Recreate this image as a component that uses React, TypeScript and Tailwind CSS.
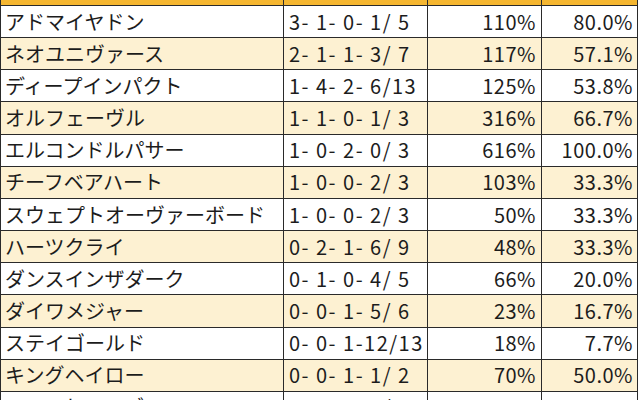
import React from 'react';

type Row = {
  name: string;
  record: string;
  recovery: string;
  rate: string;
};

const rows: Row[] = [
  { name: 'アドマイヤドン', record: '3- 1- 0- 1/ 5', recovery: '110%', rate: '80.0%' },
  { name: 'ネオユニヴァース', record: '2- 1- 1- 3/ 7', recovery: '117%', rate: '57.1%' },
  { name: 'ディープインパクト', record: '1- 4- 2- 6/13', recovery: '125%', rate: '53.8%' },
  { name: 'オルフェーヴル', record: '1- 1- 0- 1/ 3', recovery: '316%', rate: '66.7%' },
  { name: 'エルコンドルパサー', record: '1- 0- 2- 0/ 3', recovery: '616%', rate: '100.0%' },
  { name: 'チーフベアハート', record: '1- 0- 0- 2/ 3', recovery: '103%', rate: '33.3%' },
  { name: 'スウェプトオーヴァーボード', record: '1- 0- 0- 2/ 3', recovery: '50%', rate: '33.3%' },
  { name: 'ハーツクライ', record: '0- 2- 1- 6/ 9', recovery: '48%', rate: '33.3%' },
  { name: 'ダンスインザダーク', record: '0- 1- 0- 4/ 5', recovery: '66%', rate: '20.0%' },
  { name: 'ダイワメジャー', record: '0- 0- 1- 5/ 6', recovery: '23%', rate: '16.7%' },
  { name: 'ステイゴールド', record: '0- 0- 1-12/13', recovery: '18%', rate: '7.7%' },
  { name: 'キングヘイロー', record: '0- 0- 1- 1/ 2', recovery: '70%', rate: '50.0%' },
  { name: 'ヘニーヒューズ', record: '0- 0- 0- 1/ 1', recovery: '0%', rate: '0.0%' },
];

export default function App() {
  return (
    <div
      className="w-[640px] h-[400px] overflow-hidden bg-white text-[#1c1c1c]"
      style={{ fontFamily: '"Noto Sans CJK JP", "Noto Sans", sans-serif' }}
    >
      <div className="w-[638px] border-l border-r border-[#2a2a2a]">
        {/* header strip, mostly cut off at the top */}
        <div className="flex h-[6px] bg-[#f5b630] border-b border-[#2a2a2a]">
          <div className="w-[283px] border-r border-[#2a2a2a]" />
          <div className="w-[144px] border-r border-[#2a2a2a]" />
          <div className="w-[114px] border-r border-[#2a2a2a]" />
          <div className="flex-1" />
        </div>

        {rows.map((row, i) => (
          <div
            key={row.name}
            className={`flex h-[32.17px] border-b border-[#2a2a2a] text-[20px] leading-none ${
              i % 2 === 1 ? 'bg-[#fdf1d2]' : 'bg-white'
            }`}
          >
            <div className="w-[283px] flex items-center pl-[4px] border-r border-[#2a2a2a] whitespace-nowrap overflow-hidden">
              {row.name}
            </div>
            <div className="w-[144px] flex items-center pl-[5px] border-r border-[#2a2a2a] whitespace-pre tracking-[1.5px]">
              {row.record}
            </div>
            <div className="w-[114px] flex items-center justify-end pr-[5px] border-r border-[#2a2a2a] tracking-[0.5px]">
              {row.recovery}
            </div>
            <div className="flex-1 flex items-center justify-end pr-[4px] tracking-[0.5px]">
              {row.rate}
            </div>
          </div>
        ))}
      </div>
    </div>
  );
}
